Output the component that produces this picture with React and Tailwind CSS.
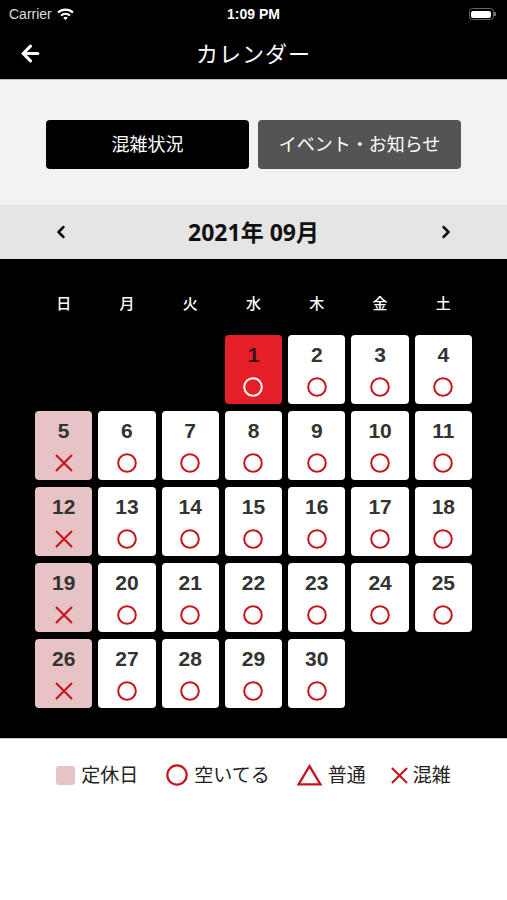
import { ArrowLeft, ChevronLeft, ChevronRight } from 'lucide-react';

const FONT = { fontFamily: '"Noto Sans", "Noto Sans CJK JP", sans-serif' };

const WEEKDAYS = ['日', '月', '火', '水', '木', '金', '土'];

// leading blanks for Sep 2021 (starts on Wednesday)
const OFFSET = 3;
const DAYS = 30;
const TODAY = 1;

const Circle = ({ color = '#c4161c', size = 20 }) => (
  <svg width={size} height={size} viewBox="0 0 20 20">
    <circle cx="10" cy="10" r="8.8" fill="none" stroke={color} strokeWidth="2" />
  </svg>
);

const Cross = ({ size = 20 }) => (
  <svg width={size} height={size} viewBox="0 0 20 20">
    <path d="M2 2 L18 18 M18 2 L2 18" stroke="#c4161c" strokeWidth="2.2" />
  </svg>
);

const Triangle = () => (
  <svg width="25" height="22" viewBox="0 0 24 21">
    <path d="M12 2 L22.5 19.5 L1.5 19.5 Z" fill="none" stroke="#c4161c" strokeWidth="2.2" strokeLinejoin="miter" />
  </svg>
);

const DayCell = ({ day }) => {
  const closed = (day + OFFSET) % 7 === 1;
  const today = day === TODAY;
  const bg = today ? 'bg-[#e51f28]' : closed ? 'bg-[#e8c3c6]' : 'bg-white';
  return (
    <div className={`${bg} h-[69px] rounded-[4px] flex flex-col items-center pt-[6px]`}>
      <span
        className={`text-[21px] font-bold leading-[28px] ${today ? 'text-[#3a1012]' : 'text-[#333333]'}`}
        style={{ fontFamily: '"Liberation Sans", sans-serif' }}
      >
        {day}
      </span>
      <div className="mt-[8px]">
        {today ? <Circle color="#ffffff" /> : closed ? <Cross /> : <Circle />}
      </div>
    </div>
  );
};

const App = () => {
  const cells = [];
  for (let i = 0; i < OFFSET; i++) cells.push(<div key={`b${i}`} />);
  for (let d = 1; d <= DAYS; d++) cells.push(<DayCell key={d} day={d} />);

  return (
    <div className="w-[507px] h-[900px] bg-white flex flex-col" style={FONT}>
      {/* status bar */}
      <div className="bg-black h-[28px] flex items-center justify-between px-[9px] text-white text-[14px]" style={{ fontFamily: '"Liberation Sans", sans-serif' }}>
        <div className="flex items-center gap-[5px] w-[120px]">
          <span className="text-[#dddddd]">Carrier</span>
          <svg width="17" height="13" viewBox="0 0 17 13">
            <path d="M1 4.5 A11 11 0 0 1 16 4.5" stroke="white" strokeWidth="2.2" fill="none" />
            <path d="M4 7.5 A7 7 0 0 1 13 7.5" stroke="white" strokeWidth="2.2" fill="none" />
            <path d="M8.5 12 L6.3 9.8 A3.2 3.2 0 0 1 10.7 9.8 Z" fill="white" />
          </svg>
        </div>
        <span className="font-bold text-[14px]">1:09 PM</span>
        <div className="w-[120px] flex justify-end pr-[2px]">
          <div className="flex items-center">
            <div className="w-[25px] h-[12px] rounded-[3.5px] border border-[#666] p-[1.5px]">
              <div className="w-full h-full bg-white rounded-[2px]" />
            </div>
            <div className="w-[2px] h-[4px] bg-[#777] rounded-r-[1px]" />
          </div>
        </div>
      </div>

      {/* nav bar */}
      <div className="bg-black h-[51px] relative flex items-center justify-center">
        <ArrowLeft className="absolute left-[18px] top-[13px]" size={25} color="white" strokeWidth={3} />
        <span className="text-white text-[22px] tracking-[1px]">カレンダー</span>
      </div>

      {/* tabs */}
      <div className="bg-[#f2f2f2] h-[126px] flex items-center justify-center gap-[9px] pt-[4px] border-t border-[#bdbdbd]">
        <button className="w-[203px] h-[49px] rounded-[4px] bg-black text-white text-[18px]">混雑状況</button>
        <button className="w-[203px] h-[49px] rounded-[4px] bg-[#545454] text-white text-[18px]">イベント・お知らせ</button>
      </div>

      {/* month bar */}
      <div className="bg-[#e5e5e5] h-[54px] flex items-center justify-between px-[51px]">
        <ChevronLeft size={20} strokeWidth={3} color="#111" />
        <span className="text-[23px] font-bold text-[#111]">2021年 09月</span>
        <ChevronRight size={20} strokeWidth={3} color="#111" />
      </div>

      {/* calendar */}
      <div className="bg-black pt-[34px] pb-[30px] px-[35px]">
        <div className="grid grid-cols-7 gap-x-[6px] mb-[22px]">
          {WEEKDAYS.map((w) => (
            <div key={w} className="text-center text-white text-[15px] font-medium leading-[20px]">{w}</div>
          ))}
        </div>
        <div className="grid grid-cols-7 gap-x-[6px] gap-y-[7px]">{cells}</div>
      </div>

      {/* legend */}
      <div className="border-t border-[#cccccc] flex items-center justify-center pt-[22px] text-[19px] text-[#222]">
        <div className="flex items-center gap-[6px] mr-[28px]">
          <div className="w-[19px] h-[19px] rounded-[3px] bg-[#e8c3c6]" />
          <span>定休日</span>
        </div>
        <div className="flex items-center gap-[6px] mr-[27px]">
          <Circle size={22} />
          <span>空いてる</span>
        </div>
        <div className="flex items-center gap-[6px] mr-[24px]">
          <Triangle />
          <span>普通</span>
        </div>
        <div className="flex items-center gap-[4px]">
          <Cross size={19} />
          <span>混雑</span>
        </div>
      </div>
    </div>
  );
};

export default App;
